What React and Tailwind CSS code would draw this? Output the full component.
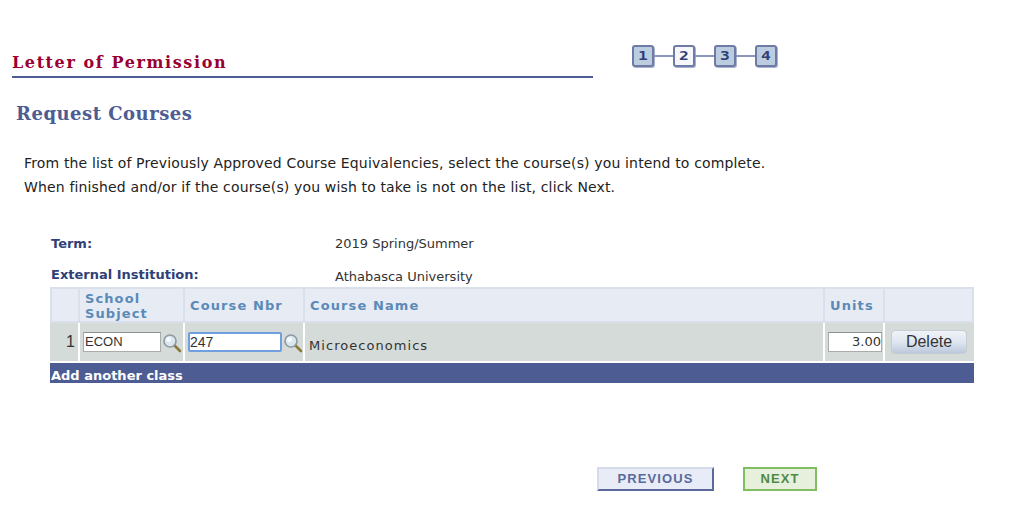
import React from 'react';

const VERDANA = "font-['DejaVu_Sans',sans-serif]";
const STEPS = ['1', '2', '3', '4'];
const BODY_COLS = 'grid grid-cols-[30px_105px_120px_520px_60px_89px]';
const HEAD_COLS = 'grid grid-cols-[28px_105px_120px_520px_60px_87px]';

function Lookup() {
  return (
    <svg width="20" height="20" viewBox="0 0 20 20" className="shrink-0 mt-[2px]">
      <line x1="12" y1="12" x2="18" y2="18" stroke="#8a7a3a" strokeWidth="2.6" strokeLinecap="round" />
      <circle cx="8" cy="8" r="6" fill="#dbe6ee" stroke="#8c9aa3" strokeWidth="1.6" />
      <circle cx="6.5" cy="6.5" r="2.5" fill="#f6fafc" />
    </svg>
  );
}

function HeaderCell({ children }) {
  return (
    <div className="flex items-center bg-[#e7ecf4] border-r-2 border-[#d9dfeb] pt-[1px] px-[5px] text-[13px] leading-[15px] font-bold tracking-[1.1px] text-[#5b8ab8] last:border-r-0">
      {children}
    </div>
  );
}

function BodyCell({ children, className = '' }) {
  return (
    <div className={`flex items-center bg-[#d5dbd8] border-r-2 border-white last:border-r-0 ${className}`}>
      {children}
    </div>
  );
}

export default function App() {
  return (
    <div className={`w-[1024px] h-[521px] overflow-hidden bg-white text-[#333] ${VERDANA}`}>
      {/* Title and step indicator */}
      <div className="flex items-start pt-[45px]">
        <div className="ml-[12px] w-[581px] h-[33px] border-b-2 border-[#4d5c92] flex items-end">
          <h1 className="font-['DejaVu_Serif',serif] font-bold text-[16px] leading-[23px] pb-[2px] tracking-[1.6px] text-[#990033]">
            Letter of Permission
          </h1>
        </div>
        <div className="ml-[39px] flex items-center">
          {STEPS.map((step, i) => (
            <React.Fragment key={step}>
              {i > 0 && <div className="w-[19px] h-[2px] bg-[#8a96bd]" />}
              <div
                className={`w-[22px] h-[22px] flex items-center justify-center rounded-[3px] border-2 border-[#6d7ba6] shadow-[1px_1px_0_#a9b2cc] text-[13px] font-bold font-['DejaVu_Sans_Mono',monospace] text-[#2f3f78] ${
                  step === '2' ? 'bg-[#f5f7fb]' : 'bg-[#bccde0]'
                }`}
              >
                <span className="scale-x-125">{step}</span>
              </div>
            </React.Fragment>
          ))}
        </div>
      </div>

      <h2 className="mt-[23px] ml-[16px] font-['DejaVu_Serif',serif] font-bold text-[18px] leading-[26px] tracking-[0.5px] text-[#4d5c92]">
        Request Courses
      </h2>

      <div className="mt-[24px] ml-[24px] text-[14px] tracking-[0.15px] leading-[24px] text-[#222]">
        <p>From the list of Previously Approved Course Equivalencies, select the course(s) you intend to complete.</p>
        <p>When finished and/or if the course(s) you wish to take is not on the list, click Next.</p>
      </div>

      {/* Term details */}
      <div className="mt-[35px] ml-[51px] text-[13px]">
        <div className="flex h-[33px]">
          <div className="w-[284px] font-bold text-[#2f3f78] leading-[20px]">Term:</div>
          <div className="leading-[20px] text-[#333]">2019 Spring/Summer</div>
        </div>
        <div className="flex h-[20px]">
          <div className="w-[284px] font-bold text-[#2f3f78] leading-[16px]">External Institution:</div>
          <div className="leading-[20px] text-[#333]">Athabasca University</div>
        </div>
      </div>

      {/* Course grid */}
      <div className="ml-[50px] w-[924px]">
        <div className={`${HEAD_COLS} h-[36px] border-2 border-[#d9dfeb]`}>
          <HeaderCell />
          <HeaderCell>
            <span>School<br />Subject</span>
          </HeaderCell>
          <HeaderCell>Course Nbr</HeaderCell>
          <HeaderCell>Course Name</HeaderCell>
          <HeaderCell>Units</HeaderCell>
          <HeaderCell />
        </div>
        <div className={`${BODY_COLS} h-[40px] border-b-2 border-white`}>
          <BodyCell className="justify-end pr-[3px] font-['Liberation_Sans',sans-serif] text-[16px] text-[#333]">1</BodyCell>
          <BodyCell className="pl-[3px] gap-[1px]">
            <div className="w-[78px] h-[20px] bg-white border border-[#a9aca9] border-t-[#8f918f] flex items-center pl-[1px] font-['Liberation_Sans',sans-serif] text-[13px] text-[#333]">
              ECON
            </div>
            <Lookup />
          </BodyCell>
          <BodyCell className="pl-[3px] gap-[1px]">
            <div className="w-[94px] h-[20px] bg-white border-2 border-[#6f9fe0] rounded-[2px] flex items-center font-['Liberation_Sans',sans-serif] text-[14px] text-[#333]">
              247
            </div>
            <Lookup />
          </BodyCell>
          <BodyCell className="pl-[4px] pt-[8px] text-[13px] tracking-[1.05px] text-[#333]">Microeconomics</BodyCell>
          <BodyCell className="pl-[3px]">
            <div className="w-[54px] h-[20px] bg-white border border-[#a9aca9] border-t-[#8f918f] flex items-center justify-end text-[13px] text-[#333]">
              3.00
            </div>
          </BodyCell>
          <BodyCell className="pl-[6px] pb-[1px]">
            <div className="w-[76px] h-[24px] rounded-[4px] border border-[#c6ccd4] bg-gradient-to-b from-[#f0f3f8] via-[#dfe6f0] to-[#bcc9dc] flex items-center justify-center font-['Liberation_Sans',sans-serif] text-[16px] text-[#333]">
              Delete
            </div>
          </BodyCell>
        </div>
        <div className="h-[20px] bg-[#4d5c92] flex items-center pt-[5px] pl-[1px] text-[13px] font-bold text-white">
          Add another class
        </div>
      </div>

      {/* Footer buttons */}
      <div className="mt-[84px] ml-[597px] flex gap-[29px]">
        <div className="w-[117px] h-[24px] bg-[#e7ecf7] border-2 border-[#d5dbe9] border-r-[#5a6a9c] border-b-[#5a6a9c] flex items-center justify-center font-['Liberation_Sans',sans-serif] text-[13px] font-bold tracking-[1.1px] text-[#5a6a9c]">
          PREVIOUS
        </div>
        <div className="w-[74px] h-[24px] bg-[#e6f0dc] border-2 border-[#7fbf5f] flex items-center justify-center font-['Liberation_Sans',sans-serif] text-[13px] font-bold tracking-[1.1px] text-[#4f8a45]">
          NEXT
        </div>
      </div>
    </div>
  );
}
